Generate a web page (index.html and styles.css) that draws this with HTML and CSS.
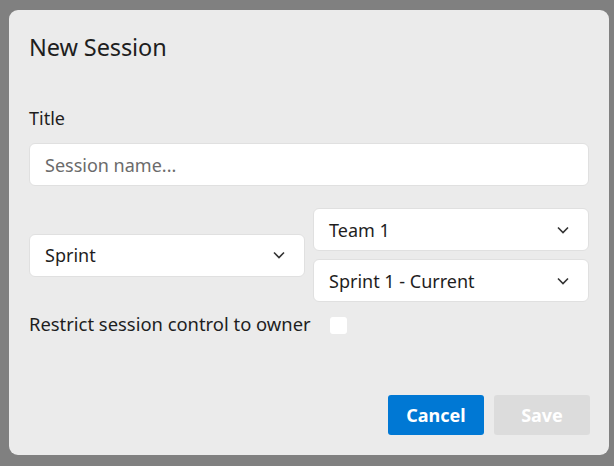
FILE: index.html
```html
<!DOCTYPE html>
<html>
<head>
<meta charset="utf-8">
<link rel="stylesheet" href="styles.css">
</head>
<body>
<div class="dialog">
  <h1 class="title">New Session</h1>
  <label class="label" for="t">Title</label>
  <input id="t" class="input" type="text" placeholder="Session name...">
  <div class="row">
    <div class="select">
      <span>Sprint</span>
      <svg class="chev" width="12" height="8" viewBox="0 0 12 8"><path d="M1 1.5 L6 6.5 L11 1.5" fill="none" stroke="#333" stroke-width="1.6"/></svg>
    </div>
    <div class="col">
      <div class="select">
        <span>Team 1</span>
        <svg class="chev" width="12" height="8" viewBox="0 0 12 8"><path d="M1 1.5 L6 6.5 L11 1.5" fill="none" stroke="#333" stroke-width="1.6"/></svg>
      </div>
      <div class="select">
        <span>Sprint 1 - Current</span>
        <svg class="chev" width="12" height="8" viewBox="0 0 12 8"><path d="M1 1.5 L6 6.5 L11 1.5" fill="none" stroke="#333" stroke-width="1.6"/></svg>
      </div>
    </div>
  </div>
  <div class="check">
    <span>Restrict session control to owner</span>
    <span class="box"></span>
  </div>
  <div class="actions">
    <button class="btn primary">Cancel</button>
    <button class="btn disabled">Save</button>
  </div>
</div>
</body>
</html>
```
FILE: styles.css
```css
html, body {
  margin: 0;
  height: 100%;
}
body {
  background: #808080;
  padding: 10px 5px 11px 9px;
  box-sizing: border-box;
  font-family: "Noto Sans", "Open Sans", sans-serif;
  color: #1e1e1e;
}
.dialog {
  width: 600px;
  height: 445px;
  box-sizing: border-box;
  background: #ebebeb;
  border-radius: 9px;
  padding: 20px 19px 20px 20px;
  display: flex;
  flex-direction: column;
}
.title {
  margin: 0;
  font-size: 23.5px;
  font-weight: 400;
  line-height: 34px;
  letter-spacing: -0.1px;
}
.label {
  margin-top: 42px;
  font-size: 18px;
  line-height: 24px;
}
.input {
  margin-top: 13px;
  margin-right: 1px;
  height: 43px;
  box-sizing: border-box;
  border: 1px solid #e0e0e0;
  border-radius: 6px;
  background: #fff;
  padding: 0 15px;
  font-family: inherit;
  font-size: 18px;
  color: #1e1e1e;
  outline: none;
}
.input::placeholder {
  color: #6b6b6b;
}
.row {
  margin-top: 22px;
  margin-right: 1px;
  display: grid;
  grid-template-columns: 1fr 1fr;
  align-items: center;
  column-gap: 8px;
}
.col {
  display: flex;
  flex-direction: column;
  gap: 8px;
}
.select {
  height: 43px;
  box-sizing: border-box;
  border: 1px solid #e0e0e0;
  border-radius: 6px;
  background: #fff;
  padding: 0 19px 0 15px;
  display: flex;
  align-items: center;
  justify-content: space-between;
  font-size: 18px;
}
.check {
  margin-top: 10px;
  display: flex;
  align-items: center;
  gap: 19px;
  font-size: 18.4px;
  line-height: 24px;
}
.box {
  width: 17px;
  height: 17px;
  background: #fff;
  border-radius: 3px;
  margin-top: 3px;
}
.actions {
  margin-top: auto;
  display: flex;
  justify-content: flex-end;
  gap: 10px;
}
.btn {
  width: 96px;
  height: 40px;
  border: none;
  border-radius: 3px;
  font-family: inherit;
  font-size: 18px;
  font-weight: 700;
  color: #fff;
}
.primary {
  background: #0078d4;
}
.disabled {
  background: #dcdcdc;
}
```
